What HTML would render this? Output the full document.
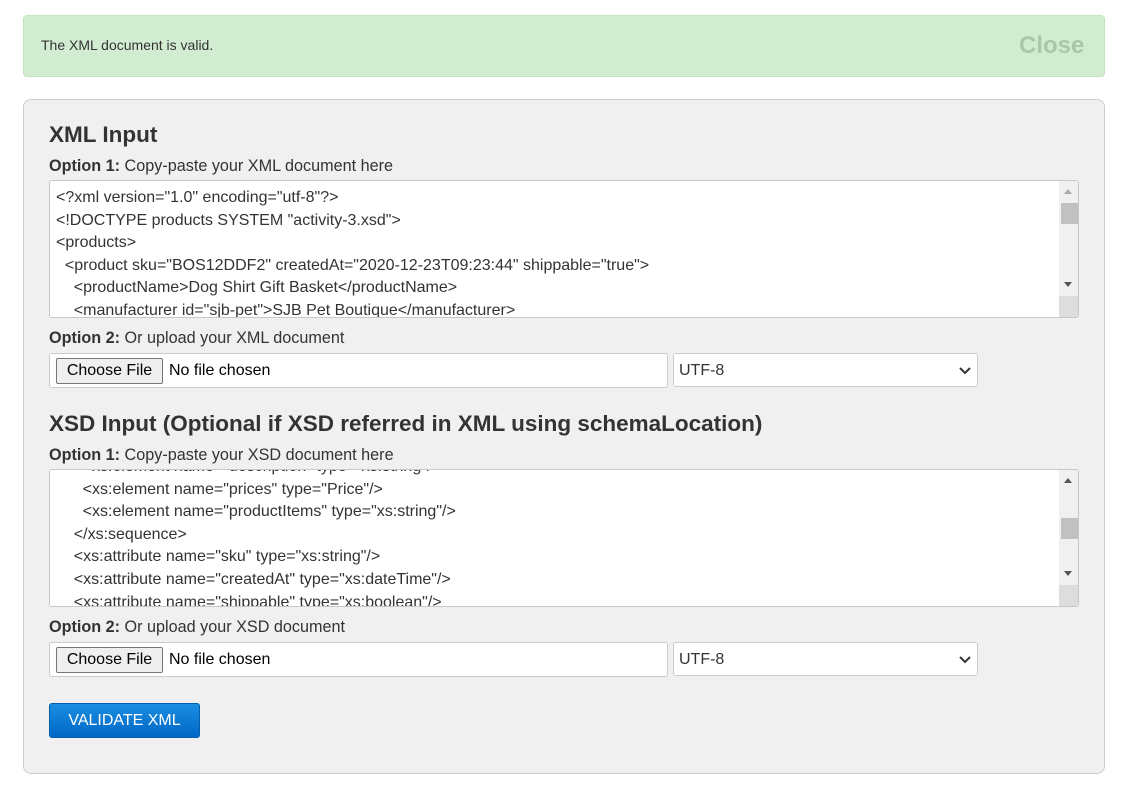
<!DOCTYPE html>
<html><head><meta charset="utf-8"><style>
*{box-sizing:border-box}
body{margin:0;width:1135px;height:788px;background:#fff;font-family:"Liberation Sans",Arial,sans-serif;color:#333;position:relative;overflow:hidden}
.a{position:absolute}
.alert{left:23px;top:15px;width:1082px;height:62px;background:#d2ecd2;border:1px solid #c3e3c3;border-radius:4px}
.panel{left:23px;top:99px;width:1082px;height:675px;background:#f0f0f0;border:1px solid #ccc;border-radius:8px}
h2{position:absolute;margin:0;font-size:22.5px;font-weight:bold;color:#333;left:49px}
.lbl{left:49px;font-size:16.2px;color:#333}
.ta{left:49px;width:1030px;height:138px;background:#fff;border:1px solid #c8c8c8;border-radius:3px;overflow:hidden}
.ta pre{margin:0;font-family:"Liberation Sans",Arial,sans-serif;font-size:16px;line-height:22.6px;color:#333;padding:0 6px;white-space:pre}
.sb{position:absolute;right:0;top:0;width:19px;height:100%;background:#f0f0f0}
.file{left:49px;width:619px;height:35px;background:#fff;border:1px solid #ccc;border-radius:3px;font-size:16px}
.file .btn{position:absolute;left:6px;top:4px;width:107px;height:26px;border:1px solid #767676;border-radius:2px;background:#efefef;text-align:center;line-height:24px;color:#000}
.file .nf{position:absolute;left:119px;top:8px;color:#000}
.sel{left:673px;width:305px;height:34px;background:#fff;border:1px solid #ccc;border-radius:3px;font-size:16px;padding:8px 5px;color:#333}
</style></head><body>
<div class="a alert"></div>
<div class="a" style="left:41px;top:37px;font-size:14px;color:#333">The XML document is valid.</div>
<div class="a" style="left:1019px;top:32px;font-size:24px;font-weight:bold;color:#a9c8a9">Close</div>
<div class="a panel"></div>

<h2 style="top:122px">XML Input</h2>
<div class="a lbl" style="top:157px"><b>Option 1:</b> Copy-paste your XML document here</div>
<div class="a ta" style="top:180px"><pre style="padding-top:6px">&lt;?xml version="1.0" encoding="utf-8"?&gt;
&lt;!DOCTYPE products SYSTEM "activity-3.xsd"&gt;
&lt;products&gt;
  &lt;product sku="BOS12DDF2" createdAt="2020-12-23T09:23:44" shippable="true"&gt;
    &lt;productName&gt;Dog Shirt Gift Basket&lt;/productName&gt;
    &lt;manufacturer id="sjb-pet"&gt;SJB Pet Boutique&lt;/manufacturer&gt;</pre>
<div class="sb"><div class="a" style="left:5px;top:8px;border:4px solid transparent;border-bottom:5px solid #aaa;border-top:0"></div><div class="a" style="left:2px;top:22px;width:17px;height:21px;background:#c1c1c1"></div><div class="a" style="left:5px;top:101px;border:4px solid transparent;border-top:5px solid #555;border-bottom:0"></div><div class="a" style="left:0;top:115px;width:19px;height:23px;background:#ddd"></div></div></div>
<div class="a lbl" style="top:329px"><b>Option 2:</b> Or upload your XML document</div>
<div class="a file" style="top:353px"><div class="btn">Choose File</div><div class="nf">No file chosen</div></div>
<div class="a sel" style="top:353px">UTF-8<svg class="a" style="right:6px;top:12px" width="12" height="9" viewBox="0 0 12 9"><path d="M1 2l5 5 5-5" stroke="#333" stroke-width="2" fill="none"/></svg></div>

<h2 style="top:411px">XSD Input (Optional if XSD referred in XML using schemaLocation)</h2>
<div class="a lbl" style="top:446px"><b>Option 1:</b> Copy-paste your XSD document here</div>
<div class="a ta" style="top:469px"><pre style="margin-top:-14px">      &lt;xs:element name="description" type="xs:string"/&gt;
      &lt;xs:element name="prices" type="Price"/&gt;
      &lt;xs:element name="productItems" type="xs:string"/&gt;
    &lt;/xs:sequence&gt;
    &lt;xs:attribute name="sku" type="xs:string"/&gt;
    &lt;xs:attribute name="createdAt" type="xs:dateTime"/&gt;
    &lt;xs:attribute name="shippable" type="xs:boolean"/&gt;</pre>
<div class="sb"><div class="a" style="left:5px;top:8px;border:4px solid transparent;border-bottom:5px solid #555;border-top:0"></div><div class="a" style="left:2px;top:48px;width:17px;height:21px;background:#c1c1c1"></div><div class="a" style="left:5px;top:101px;border:4px solid transparent;border-top:5px solid #555;border-bottom:0"></div><div class="a" style="left:0;top:115px;width:19px;height:23px;background:#ddd"></div></div></div>
<div class="a lbl" style="top:618px"><b>Option 2:</b> Or upload your XSD document</div>
<div class="a file" style="top:642px"><div class="btn">Choose File</div><div class="nf">No file chosen</div></div>
<div class="a sel" style="top:642px">UTF-8<svg class="a" style="right:6px;top:12px" width="12" height="9" viewBox="0 0 12 9"><path d="M1 2l5 5 5-5" stroke="#333" stroke-width="2" fill="none"/></svg></div>

<div class="a" style="left:49px;top:703px;width:151px;height:35px;border-radius:3px;background:linear-gradient(#1a8ee0,#0068c8);border:1px solid #0060b0;color:#fff;font-size:16px;text-align:center;line-height:33px">VALIDATE XML</div>
</body></html>
